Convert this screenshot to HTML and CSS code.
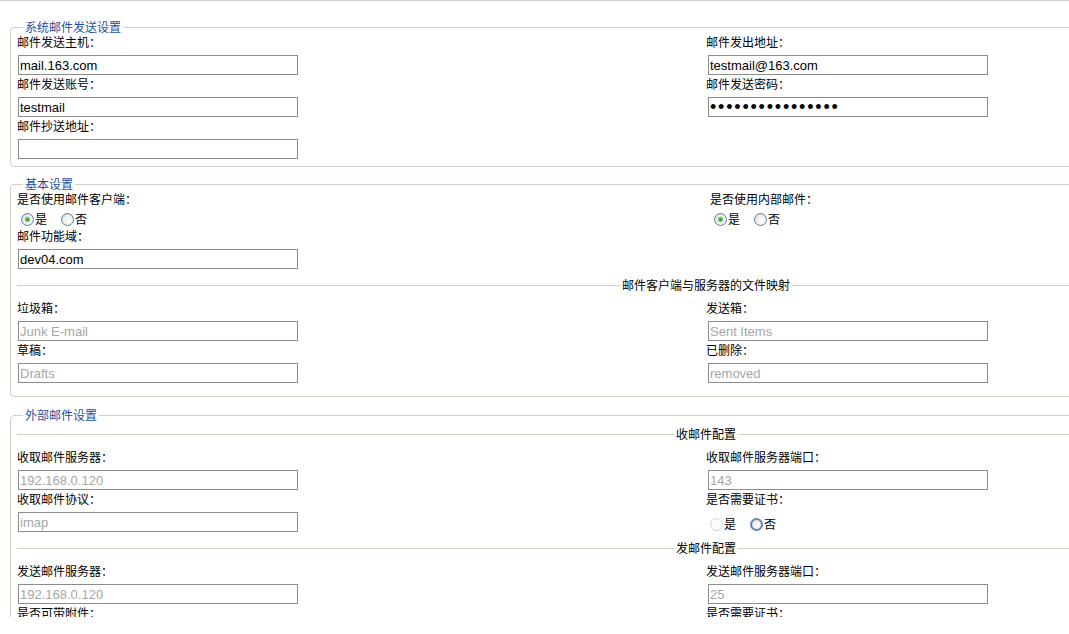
FILE: index.html
```html
<!DOCTYPE html>
<html lang="zh-CN">
<head>
<meta charset="utf-8">
<title>邮件设置</title>
<link rel="stylesheet" href="styles.css">
</head>
<body>
<div class="frame">

  <fieldset class="group group--first">
    <legend>系统邮件发送设置</legend>
    <div class="grid">
      <div class="field"><span class="label">邮件发送主机：</span><input class="text" type="text" value="mail.163.com"></div>
      <div class="field"><span class="label">邮件发出地址：</span><input class="text" type="text" value="testmail@163.com"></div>
      <div class="field"><span class="label">邮件发送账号：</span><input class="text" type="text" value="testmail"></div>
      <div class="field"><span class="label">邮件发送密码：</span><input class="text pw" type="password" value="abcdefghijklmnop"></div>
      <div class="field"><span class="label">邮件抄送地址：</span><input class="text" type="text" value=""></div>
    </div>
  </fieldset>

  <fieldset class="group group--basic">
    <legend>基本设置</legend>
    <div class="grid">
      <div class="field">
        <span class="label">是否使用邮件客户端：</span>
        <div class="choices">
          <input class="radio" type="radio" name="client" checked><span>是</span>
          <input class="radio radio--next" type="radio" name="client"><span>否</span>
        </div>
      </div>
      <div class="field field--inset">
        <span class="label">是否使用内部邮件：</span>
        <div class="choices">
          <input class="radio" type="radio" name="inner" checked><span>是</span>
          <input class="radio radio--next" type="radio" name="inner"><span>否</span>
        </div>
      </div>
      <div class="field"><span class="label">邮件功能域：</span><input class="text" type="text" value="dev04.com"></div>
    </div>
    <div class="divider"><span>邮件客户端与服务器的文件映射</span></div>
    <div class="grid">
      <div class="field"><span class="label">垃圾箱：</span><input class="text muted" type="text" value="Junk E-mail" readonly></div>
      <div class="field"><span class="label">发送箱：</span><input class="text muted" type="text" value="Sent Items" readonly></div>
      <div class="field"><span class="label">草稿：</span><input class="text muted" type="text" value="Drafts" readonly></div>
      <div class="field"><span class="label">已删除：</span><input class="text muted" type="text" value="removed" readonly></div>
    </div>
  </fieldset>

  <fieldset class="group group--outer">
    <legend>外部邮件设置</legend>
    <div class="divider divider--lead"><span>收邮件配置</span></div>
    <div class="grid">
      <div class="field"><span class="label">收取邮件服务器：</span><input class="text muted" type="text" value="192.168.0.120" readonly></div>
      <div class="field"><span class="label">收取邮件服务器端口：</span><input class="text muted" type="text" value="143" readonly></div>
      <div class="field"><span class="label">收取邮件协议：</span><input class="text muted" type="text" value="imap" readonly></div>
      <div class="field">
        <span class="label">是否需要证书：</span>
        <div class="choices choices--low">
          <input class="radio radio--off" type="radio" name="cert-in" disabled><span>是</span>
          <input class="radio radio--next radio--ring" type="radio" name="cert-in"><span>否</span>
        </div>
      </div>
    </div>
    <div class="divider"><span>发邮件配置</span></div>
    <div class="grid">
      <div class="field"><span class="label">发送邮件服务器：</span><input class="text muted" type="text" value="192.168.0.120" readonly></div>
      <div class="field"><span class="label">发送邮件服务器端口：</span><input class="text muted" type="text" value="25" readonly></div>
      <div class="field"><span class="label">是否可带附件：</span></div>
      <div class="field"><span class="label">是否需要证书：</span></div>
    </div>
  </fieldset>

</div>
</body>
</html>
```

FILE: styles.css
```css
html, body {
  margin: 0;
  padding: 0;
  background: #ffffff;
  overflow: hidden;
}

body {
  font-family: "Noto Sans CJK SC", "Noto Sans", sans-serif;
  font-size: 12px;
  color: #000000;
}

/* scrolling content area */
.frame {
  width: 1440px;
  height: 616px;
  overflow: hidden;
  border-top: 1px solid #cfcfcf;
}

/* settings groups */
.group {
  margin: 11px 0 0 10px;
  padding: 0 6px 7px;
  width: 1378px;
  border: 1px solid #d0d0bf;
  border-radius: 4px;
  min-width: 0;
}

.group--first {
  margin-top: 20px;
}

.group--basic {
  padding-bottom: 13px;
}

.group--outer {
  margin-top: 12px;
  padding-bottom: 20px;
}

.group legend {
  margin-left: 6px;
  padding: 0 2px;
  font-size: 12px;
  line-height: 12px;
  color: #1f4fa3;
}

/* two column form */
.grid {
  display: grid;
  grid-template-columns: 689px 689px;
}

.field--inset {
  padding-left: 4px;
}

.label {
  display: block;
  height: 18px;
  line-height: 18px;
  white-space: nowrap;
}

.text {
  display: block;
  box-sizing: border-box;
  width: 280px;
  height: 20px;
  margin: 4px 0 0 1px;
  padding: 0 1px;
  border: 1px solid #8c8c8c;
  border-radius: 0;
  background: #ffffff;
  font-family: "Liberation Sans", Arial, sans-serif;
  font-size: 13px;
  color: #000000;
  outline: none;
}

.grid > .field:nth-child(even) .text {
  margin-left: 2px;
}

.muted {
  color: #a6a6a6;
}

.pw {
  font-size: 18px;
  letter-spacing: 1.8px;
}

/* radio choices */
.choices {
  display: flex;
  align-items: center;
  height: 16px;
  margin-top: 3px;
  line-height: 16px;
}

.choices--low {
  margin-top: 8px;
}

.radio {
  appearance: none;
  -webkit-appearance: none;
  box-sizing: border-box;
  width: 13px;
  height: 13px;
  margin: 0 0 0 4px;
  border: 1px solid #5f7f9f;
  border-radius: 50%;
  background: radial-gradient(circle at 65% 65%, #ffffff 0, #f1f1ec 45%, #cfd3d8 100%);
}

.radio:checked {
  background:
    radial-gradient(circle, #2e9f2e 0, #52b552 1.6px, #a6d7a6 2.6px, rgba(255, 255, 255, 0) 3.2px),
    radial-gradient(circle at 65% 65%, #ffffff 0, #f1f1ec 45%, #cfd3d8 100%);
}

.radio--next {
  margin-left: 14px;
}

.radio--off {
  border-color: #d4d4d4;
  background: #fbfbfb;
}

.radio--ring {
  border: 2px solid #6b86a6;
  background: radial-gradient(circle at 60% 60%, #ffffff 0, #e9ebee 60%, #c9d0d8 100%);
}

.choices span {
  margin-left: 1px;
}

/* titled separator lines */
.divider {
  display: flex;
  align-items: center;
  margin: 7px 0 5px;
  height: 18px;
  line-height: 18px;
  white-space: nowrap;
}

.divider::before,
.divider::after {
  content: "";
  flex: 1;
  border-top: 1px solid #d0d0bf;
}

.divider span {
  padding: 0 2px;
}

.divider--lead {
  margin-top: 4px;
}
```
